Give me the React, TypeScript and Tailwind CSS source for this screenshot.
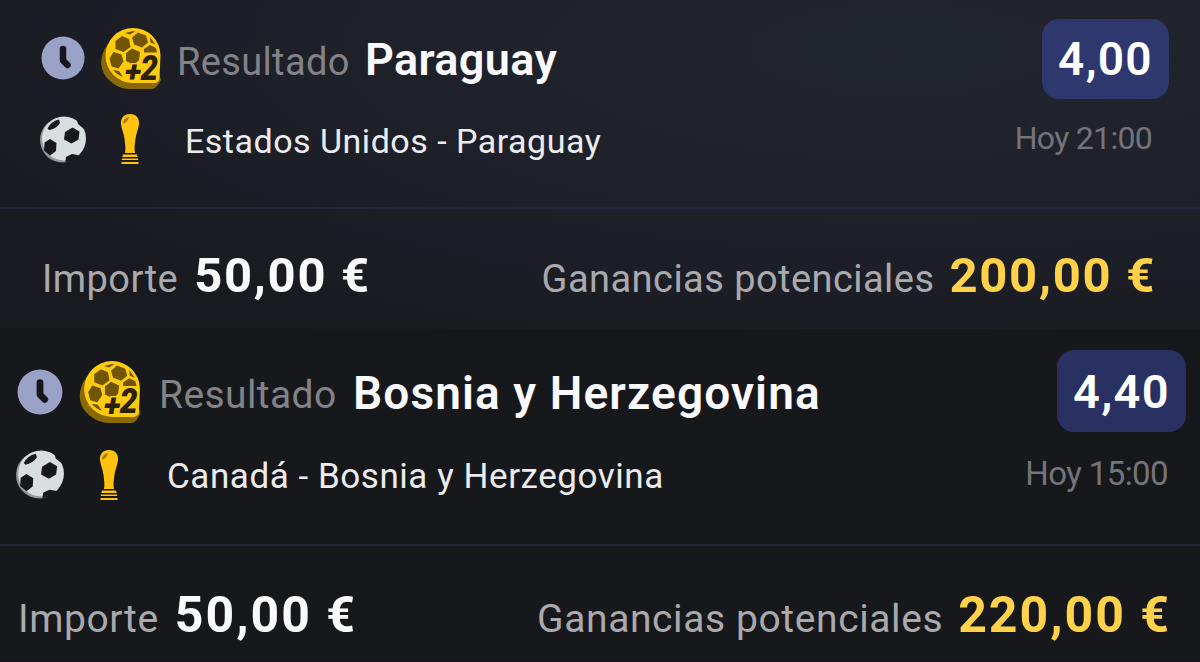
import clsx from 'clsx'

const tickets = [
  {
    title: 'Paraguay',
    match: 'Estados Unidos - Paraguay',
    odds: '4,00',
    time: 'Hoy 21:00',
    stake: '50,00 €',
    winnings: '200,00 €',
    styles: {
      card: 'h-[329px] bg-[radial-gradient(ellipse_at_75%_15%,#22262e_0%,#1f212a_40%,#191a1f_85%)]',
      top: 'h-[99px] pt-[19px] pl-[41px] pr-[31px]',
      clock: 'size-[44px] mt-[17px]',
      coin: 'w-[62px] h-[63px] mt-[8px] ml-[15px]',
      label: 'ml-[15px] mt-[24px] w-[188px] text-[38px] tracking-[0.35px]',
      title: 'mt-[18px] text-[45px] tracking-[0.35px]',
      odds: 'h-[80px] w-[127px] rounded-[17px] bg-[#2e386f] text-[46px] tracking-[1.3px]',
      middle: 'h-[108px] pt-[15px] pl-[39px] pr-[48px]',
      ball: 'size-[48px] mt-[1px]',
      trophy: 'w-[20px] h-[50px] ml-[33px]',
      match: 'ml-[45px] mt-[10px] text-[34px] tracking-[0.5px]',
      time: 'mt-[8px] text-[32px] tracking-[-0.7px]',
      line: 'border-[#23243a]',
      bottom: 'pt-[42px] pl-[42px] pr-[44px]',
      caption: 'text-[38px] tracking-[0.45px]',
      amount: 'text-[49px] tracking-[1.7px]',
    },
  },
  {
    title: 'Bosnia y Herzegovina',
    match: 'Canadá - Bosnia y Herzegovina',
    odds: '4,40',
    time: 'Hoy 15:00',
    stake: '50,00 €',
    winnings: '220,00 €',
    styles: {
      card: 'h-[333px] bg-[#17181c] border-b border-[#1d1022]',
      top: 'h-[104px] pt-[21px] pl-[17px] pr-[14px]',
      clock: 'size-[46px] mt-[19px]',
      coin: 'w-[64px] h-[64px] mt-[10px] ml-[15px]',
      label: 'ml-[17px] mt-[26px] w-[194px] text-[39px] tracking-[0.4px]',
      title: 'mt-[20px] text-[46px] tracking-[1.1px]',
      odds: 'h-[82px] w-[129px] rounded-[17px] bg-[#283162] text-[47px] tracking-[1.3px]',
      middle: 'h-[111px] pt-[16px] pl-[15px] pr-[32px]',
      ball: 'size-[50px]',
      trophy: 'w-[20px] h-[52px] ml-[34px]',
      match: 'ml-[48px] mt-[10px] text-[35px] tracking-[0.55px]',
      time: 'mt-[8px] text-[33px] tracking-[-0.6px]',
      line: 'border-[#242635]',
      bottom: 'pt-[44px] pl-[18px] pr-[29px]',
      caption: 'text-[39px] tracking-[0.6px]',
      amount: 'text-[50px] tracking-[2px]',
    },
  },
]

function ClockIcon({ className }: { className: string }) {
  return (
    <svg viewBox="0 0 44 44" className={className}>
      <circle cx="22" cy="22" r="21.500" fill="#9ba2c7" />
      <path d="M22 13v11.500l4.500 4.500" fill="none" stroke="#15161d" strokeWidth="6.500" strokeLinecap="round" strokeLinejoin="round" />
    </svg>
  )
}

function CoinIcon({ className }: { className: string }) {
  return (
    <svg viewBox="0 0 62 63" className={className}>
      <path d="M8 17C-1 28-1 43 8 52c7 7 14 10 22 10h22q3 0 5-3l4-6-3-10L30 18Z" fill="#8a6803" />
      <path d="M33 1a27.500 27.500 0 0 0 0 55h21q5 0 5.500-5L60.500 28.500A27.500 27.500 0 0 0 33 1Z" fill="#ffcb0f" />
      <g fill="#715500">
        <path d="m22 9 7 3 1.500 8-7 5-8-3 0-8Z" />
        <path d="m38 5.500 8 3 2 7-6 5-8-3-2-7Z" />
        <path d="m13.500 25 8 2.500 2 7-5 7-7-2-2-8Z" />
        <path d="m32 21.500 8 3.500-1 8-5 5-8-4-0-8Z" />
        <path d="m25 6 8-2 2 .5-5 3Z" />
        <path d="m50 10 5.500 7.500-5-2Z" />
        <path d="m44 22 6-4 6 3 1 4.500H44Z" />
        <path d="m13 43 6 1 4 6q-6-2-10-7Z" />
      </g>
      <g fontFamily="Roboto, sans-serif" fontWeight="900" fontStyle="italic" fill="#2b2108" stroke="#ffcb0f" strokeWidth="3" paintOrder="stroke">
        <text x="25" y="55" fontSize="30" textLength="16" lengthAdjust="spacingAndGlyphs">+</text>
        <text x="40.500" y="52.500" fontSize="35" textLength="17.500" lengthAdjust="spacingAndGlyphs">2</text>
      </g>
    </svg>
  )
}

function BallIcon({ className }: { className: string }) {
  return (
    <svg viewBox="0 0 48 48" className={className}>
      <circle cx="23.500" cy="25" r="22.500" fill="#94979b" />
      <circle cx="25" cy="23.500" r="22" fill="#d8dde0" />
      <g fill="#17181e">
        <path d="m33.500 12.500 7 4-1 8-7 4-7.500-4 1-7.500Z" />
        <path d="m11 24 6.500 4-.5 8-6 4.500-6-5 .5-8Z" />
        <path d="M8.500 13.500q3-7 11.500-9l1 3.500q-4 6-11 7Z" />
        <path d="M26.500 46.500l.5-4.500 6-3 6 1 1.500 1q-6 6-14 6Z" />
        <path d="m38 4 5.500 5 1.500 5-6-5Z" />
      </g>
    </svg>
  )
}

function TrophyIcon({ className }: { className: string }) {
  return (
    <svg viewBox="0 0 20 50" className={className}>
      <path d="M10 0C4 0 .5 4 1 10c.3 5 3 9 3.500 15 .5 5 1.500 9 .5 14h10c-1-5-.2-9 .5-14 .5-6 3.200-10 3.500-15C19.500 4 16 0 10 0Z" fill="#ffc20e" />
      <path d="M3 10q0-6 6-7-1 5-6 7Z" fill="#a87800" />
      <path d="M3 40.500h14l.7 2.500H2.300ZM2 44.500h16l.3 1.500H1.700ZM1.500 48h17v2h-17Z" fill="#ffc20e" />
    </svg>
  )
}

function Ticket({ ticket }: { ticket: (typeof tickets)[number] }) {
  const s = ticket.styles
  return (
    <section className={clsx('flex flex-col overflow-hidden', s.card)}>
      <div className={clsx('flex shrink-0 items-start', s.top)}>
        <ClockIcon className={clsx('shrink-0', s.clock)} />
        <CoinIcon className={clsx('shrink-0', s.coin)} />
        <span className={clsx('shrink-0 text-[#828289]', s.label)}>Resultado</span>
        <h2 className={clsx('font-semibold text-[#f9f9fc]', s.title)}>{ticket.title}</h2>
        <span className={clsx('ml-auto flex items-center justify-center font-semibold text-white', s.odds)}>
          {ticket.odds}
        </span>
      </div>
      <div className={clsx('flex shrink-0 items-start', s.middle)}>
        <BallIcon className={clsx('shrink-0', s.ball)} />
        <TrophyIcon className={clsx('shrink-0', s.trophy)} />
        <span className={clsx('text-[#ececf0]', s.match)}>{ticket.match}</span>
        <span className={clsx('ml-auto text-[#74747a]', s.time)}>{ticket.time}</span>
      </div>
      <div className={clsx('flex grow items-baseline justify-between border-t-2', s.line, s.bottom)}>
        <p className="flex items-baseline gap-4">
          <span className={clsx('text-[#a9a9ae]', s.caption)}>Importe</span>
          <span className={clsx('font-bold text-[#f9f9fc]', s.amount)}>{ticket.stake}</span>
        </p>
        <p className="flex items-baseline gap-[15px]">
          <span className={clsx('text-[#a9a9ae]', s.caption)}>Ganancias potenciales</span>
          <span className={clsx('font-bold text-[#ffd24a]', s.amount)}>{ticket.winnings}</span>
        </p>
      </div>
    </section>
  )
}

export default function App() {
  return (
    <main className="h-[662px] w-[1200px] overflow-hidden bg-[#17181c] font-['Roboto',sans-serif] leading-none whitespace-nowrap">
      {tickets.map((ticket) => (
        <Ticket key={ticket.title} ticket={ticket} />
      ))}
    </main>
  )
}
